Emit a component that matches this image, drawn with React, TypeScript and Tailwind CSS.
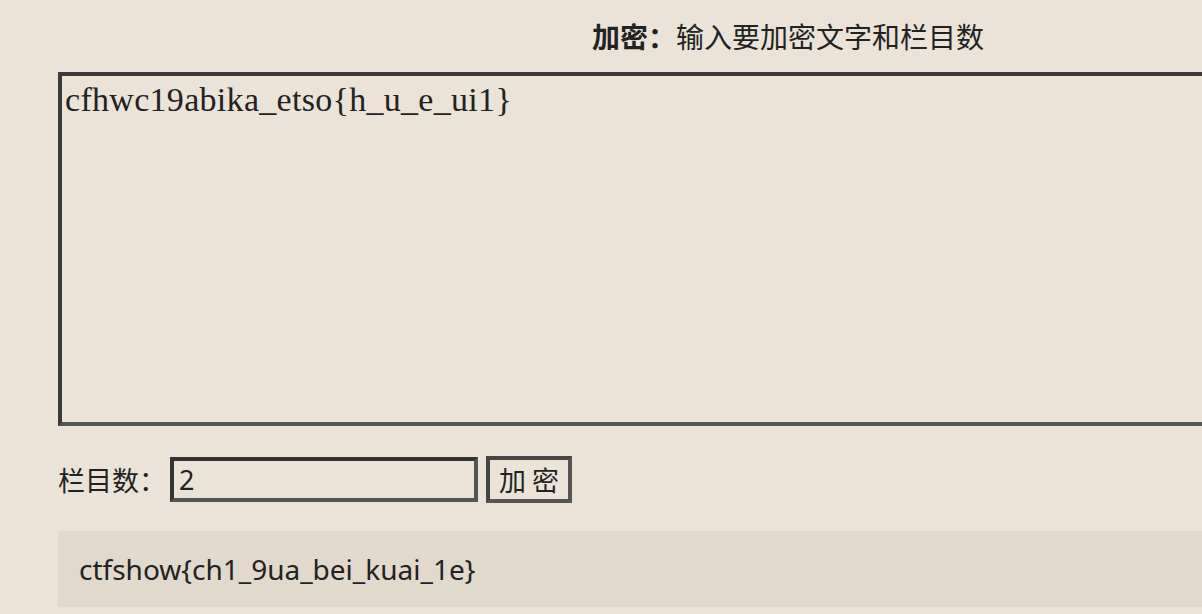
import React from "react";

export default function App() {
  return (
    <div className="w-screen h-screen overflow-hidden bg-[#ebe3d7] text-[#222222]">
      <div className="ml-[58px] w-[1460px]">
        <div
          className="h-[72px] flex items-center justify-center text-[28px]"
          style={{ fontFamily: '"Noto Sans CJK SC", "Noto Sans", sans-serif' }}
        >
          <span className="font-bold">加密：</span>
          <span>输入要加密文字和栏目数</span>
        </div>
        <textarea
          defaultValue="cfhwc19abika_etso{h_u_e_ui1}"
          className="block w-full h-[354px] resize-none bg-transparent border-4 border-t-[#3a3a3a] border-l-[#3a3a3a] border-r-[#555555] border-b-[#555555] pt-[4px] pl-[3px] text-[34px] tracking-[0.3px] leading-[1.15] text-[#222222] outline-none"
          style={{ fontFamily: '"Liberation Serif", serif' }}
        />
        <div
          className="mt-[30px] flex items-center h-[47px] text-[27px]"
          style={{ fontFamily: '"Noto Sans CJK SC", "Noto Sans", sans-serif' }}
        >
          <span className="w-[112px] leading-none">栏目数：</span>
          <input
            defaultValue="2"
            className="w-[308px] h-[45px] bg-transparent border-4 border-t-[#333333] border-l-[#333333] border-r-[#555555] border-b-[#555555] pl-[5px] text-[27px] text-[#222222] outline-none"
            style={{ fontFamily: '"Noto Sans", sans-serif' }}
          />
          <button className="ml-[8px] w-[86px] h-[47px] border-4 border-[#454545] border-r-[#555555] border-b-[#555555] flex items-center justify-center text-[27px] leading-none">
            加 密
          </button>
        </div>
        <div
          className="mt-[28px] h-[76px] bg-[#e1d9cc] flex items-center pl-[21px] text-[28px]"
          style={{ fontFamily: '"Noto Sans", sans-serif' }}
        >
          ctfshow{"{"}ch1_9ua_bei_kuai_1e{"}"}
        </div>
      </div>
    </div>
  );
}
